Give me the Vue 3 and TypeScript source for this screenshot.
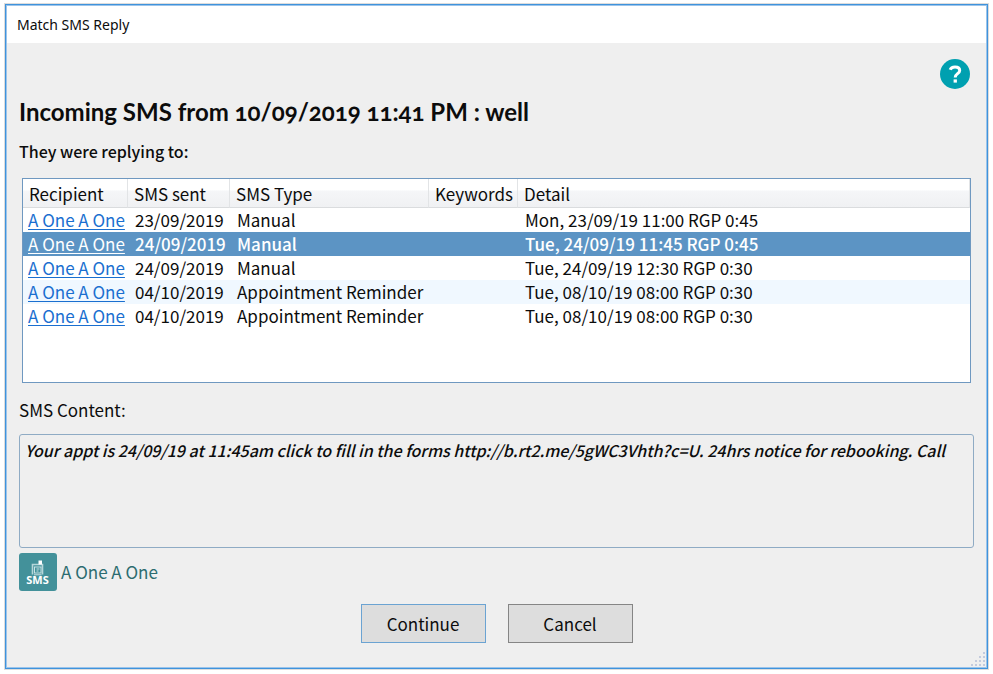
<script setup lang="ts">
import { ref } from 'vue'

interface Message {
  id: number
  recipient: string
  sent: string
  type: string
  keywords: string
  detail: string
}

const messages: Message[] = [
  { id: 1, recipient: 'A One A One', sent: '23/09/2019', type: 'Manual', keywords: '', detail: 'Mon, 23/09/19 11:00 RGP 0:45' },
  { id: 2, recipient: 'A One A One', sent: '24/09/2019', type: 'Manual', keywords: '', detail: 'Tue, 24/09/19 11:45 RGP 0:45' },
  { id: 3, recipient: 'A One A One', sent: '24/09/2019', type: 'Manual', keywords: '', detail: 'Tue, 24/09/19 12:30 RGP 0:30' },
  { id: 4, recipient: 'A One A One', sent: '04/10/2019', type: 'Appointment Reminder', keywords: '', detail: 'Tue, 08/10/19 08:00 RGP 0:30' },
  { id: 5, recipient: 'A One A One', sent: '04/10/2019', type: 'Appointment Reminder', keywords: '', detail: 'Tue, 08/10/19 08:00 RGP 0:30' },
]

const selectedId = ref(2)
const content = ref(
  'Your appt is 24/09/19 at 11:45am click to fill in the forms http://b.rt2.me/5gWC3Vhth?c=U. 24hrs notice for rebooking. Call',
)

// Resize grip: a triangle of dots, one more in each row down
const gripDots = [0, 1, 2, 3].flatMap((row) =>
  Array.from({ length: row + 1 }, (_, i) => ({ x: 12 - i * 4, y: row * 4 })),
)
</script>

<template>
  <div class="screen">
    <main class="window">
      <header class="titlebar">Match SMS Reply</header>
      <div class="body">
        <div class="help-row">
          <button class="help" type="button" aria-label="Help">
            <svg viewBox="0 0 30 30" width="30" height="30" aria-hidden="true">
              <circle cx="15" cy="15" r="15" fill="#00a0b0" />
              <path d="M10.200 10.800C10.800 8.800 12.500 7.900 15 7.900c2.900 0 4.700 1.400 4.700 3.500 0 3.200-4.500 3.300-4.500 7" fill="none" stroke="#fff" stroke-width="3" />
              <rect x="13.600" y="20.400" width="3.300" height="3.200" fill="#fff" />
            </svg>
          </button>
        </div>
        <h1>Incoming SMS from 10/09/2019 11:41 PM : well</h1>
        <h2>They were replying to:</h2>
        <div class="list">
          <table>
            <colgroup>
              <col class="c-recipient" />
              <col class="c-sent" />
              <col class="c-type" />
              <col class="c-keywords" />
              <col />
            </colgroup>
            <thead>
              <tr>
                <th scope="col">Recipient</th>
                <th scope="col">SMS sent</th>
                <th scope="col">SMS Type</th>
                <th scope="col">Keywords</th>
                <th scope="col">Detail</th>
              </tr>
            </thead>
            <tbody>
              <tr
                v-for="m in messages"
                :key="m.id"
                :class="{ selected: m.id === selectedId }"
                @click="selectedId = m.id"
              >
                <td><a href="#" @click.prevent>{{ m.recipient }}</a></td>
                <td>{{ m.sent }}</td>
                <td>{{ m.type }}</td>
                <td>{{ m.keywords }}</td>
                <td>{{ m.detail }}</td>
              </tr>
            </tbody>
          </table>
        </div>
        <label class="content-label" for="sms-content">SMS Content:</label>
        <textarea id="sms-content" v-model="content" class="content" readonly></textarea>
        <div class="sender">
          <svg class="sms-icon" viewBox="0 0 38 38" width="38" height="38" aria-hidden="true">
            <rect width="38" height="38" rx="3" fill="#43919a" />
            <path d="M13.500 21.500V11.500h10V21.500" fill="none" stroke="#b5d6d9" stroke-width="1.600" />
            <rect x="19.500" y="7.500" width="3.500" height="4" fill="#fff" />
            <rect x="15.500" y="14" width="6.500" height="6" fill="none" stroke="#c9e2e4" />
            <path d="M17.500 16h3M17.500 18h2M15 21.800h7.500" stroke="#c9e2e4" stroke-width="1" />
            <text x="18.500" y="31" text-anchor="middle">SMS</text>
          </svg>
          <span>A One A One</span>
        </div>
        <div class="actions">
          <button class="action primary" type="button">Continue</button>
          <button class="action" type="button">Cancel</button>
        </div>
      </div>
      <svg class="grip" viewBox="0 0 14 14" width="14" height="14" aria-hidden="true">
        <rect v-for="(d, i) in gripDots" :key="i" :x="d.x" :y="d.y" width="2" height="2" fill="#c3cbdd" />
      </svg>
    </main>
  </div>
</template>

<style>
body {
  background: #fff;
}
</style>

<style scoped>
.screen {
  box-sizing: border-box;
  min-height: 100vh;
  padding: 4px 5px 5px;
  display: flex;
  font-family: "Noto Sans CJK SC", "Open Sans", sans-serif;
  font-size: 17px;
  line-height: 24px;
  color: #0c0c0c;
}

.window {
  position: relative;
  flex: 1;
  min-width: 0;
  display: flex;
  flex-direction: column;
  border: 1px solid #3f93dc;
  box-shadow: 0 0 0 1px #dcdcdc, inset 0 0 0 1px #9cc4ea;
  background: #efefef;
}

.titlebar {
  margin: 1px 1px 0;
  padding: 0 10px;
  background: #fff;
  font-family: "Noto Sans", sans-serif;
  font-size: 14px;
  line-height: 37px;
}

.body {
  flex: 1;
  display: flex;
  flex-direction: column;
  padding: 16px 13px 24px 13px;
}

.help-row {
  display: flex;
  justify-content: flex-end;
  padding-right: 4px;
}

.help {
  display: block;
  width: 30px;
  height: 30px;
  padding: 0;
  border: 0;
  background: none;
}

.help svg {
  display: block;
}

h1 {
  margin: 7px 0 0;
  font-family: Lato, sans-serif;
  font-size: 24px;
  font-weight: 700;
  line-height: 32px;
  font-variant-numeric: oldstyle-nums;
}

h2 {
  margin: 11px 0 0;
  font-size: 16px;
  font-weight: 500;
  line-height: 24px;
}

.list {
  box-sizing: border-box;
  min-height: 205px;
  margin: 15px 3px 0;
  border: 1px solid #6f98c0;
  background: #fff;
}

table {
  width: 100%;
  table-layout: fixed;
  border-collapse: separate;
  border-spacing: 0;
}

.c-recipient {
  width: 105px;
}

.c-sent {
  width: 102px;
}

.c-type {
  width: 199px;
}

.c-keywords {
  width: 89px;
}

th {
  box-sizing: border-box;
  height: 29px;
  padding: 1px 0 0 6px;
  border-right: 1px solid #e2e4e6;
  border-bottom: 1px solid #dadcde;
  background: linear-gradient(#fff 40%, #f5f6f8 42%, #f0f1f3);
  font-weight: 400;
  text-align: left;
  white-space: nowrap;
}

td {
  height: 24px;
  padding: 0 0 0 7px;
  line-height: 24px;
  white-space: nowrap;
}

td:first-child {
  padding-left: 5px;
}

tbody tr:nth-child(4) {
  background: #f0f8ff;
}

tbody tr.selected {
  background: #5c94c4;
  color: #fff;
  font-weight: 500;
}

a {
  color: #1a6fd0;
  text-decoration: underline;
  text-underline-offset: 2px;
}

.selected a {
  color: #fff;
  font-weight: 400;
}

.content-label {
  margin-top: 15px;
}

.content {
  box-sizing: border-box;
  display: block;
  width: 100%;
  height: 114px;
  margin: 12px 0 0;
  padding: 3px 5px;
  border: 1px solid #8fabc4;
  border-radius: 3px;
  outline: none;
  background: #efefef;
  color: inherit;
  font: inherit;
  font-size: 16px;
  font-style: italic;
  font-weight: 500;
  resize: none;
  overflow: hidden;
}

.sender {
  display: flex;
  align-items: center;
  gap: 4px;
  margin-top: 5px;
  color: #2c6c70;
}

.sms-icon text {
  fill: #fff;
  font-family: "Noto Sans", sans-serif;
  font-size: 11px;
  font-weight: 700;
}

.actions {
  display: flex;
  justify-content: center;
  gap: 22px;
  margin-top: 13px;
}

.action {
  box-sizing: border-box;
  width: 125px;
  height: 39px;
  padding: 0;
  border: 1px solid #858585;
  background: #ddd;
  color: inherit;
  font: inherit;
}

.action.primary {
  border-color: #6ba3d2;
}

.grip {
  position: absolute;
  right: 2px;
  bottom: 2px;
}
</style>
